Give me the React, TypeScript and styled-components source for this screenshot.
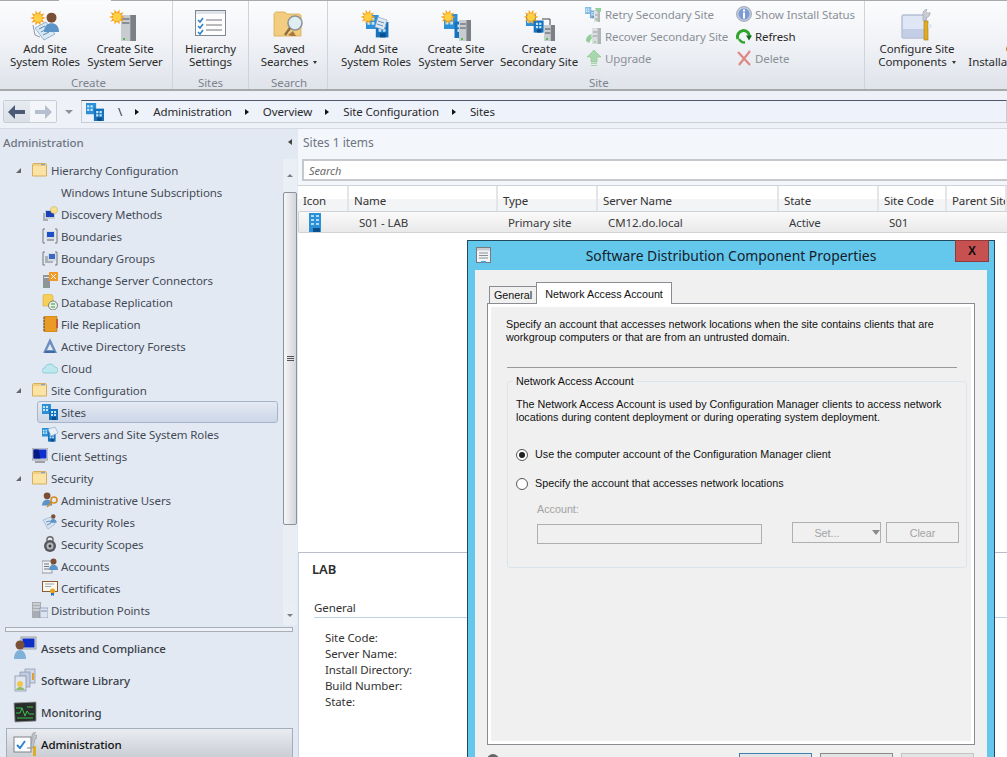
import React from 'react';
import styled, { createGlobalStyle } from 'styled-components';

const GlobalStyle = createGlobalStyle`
  html, body { margin: 0; padding: 0; background: #fff; }
  * { box-sizing: border-box; }
`;

const burst = (cx: number, cy: number, r1: number, r2: number, n = 10) => {
  const pts: string[] = [];
  for (let i = 0; i < n * 2; i++) {
    const r = i % 2 ? r2 : r1;
    const a = (Math.PI * i) / n;
    pts.push(`${(cx + r * Math.cos(a)).toFixed(2)},${(cy + r * Math.sin(a)).toFixed(2)}`);
  }
  return pts.join(' ');
};

const Sun = ({ cx, cy, r }: { cx: number; cy: number; r: number }) => (
  <g>
    <polygon points={burst(cx, cy, r, r * 0.55)} fill="#f7a11b" />
    <circle cx={cx} cy={cy} r={r * 0.5} fill="#ffd044" />
  </g>
);

const Blocks = ({ x = 0, y = 0, s = 1 }: { x?: number; y?: number; s?: number }) => (
  <g transform={`translate(${x} ${y}) scale(${s})`}>
    <rect x="0" y="0" width="9" height="10" fill="#2d8fd6" />
    <rect x="7" y="5" width="9" height="11" fill="#1672bd" />
    <path d="M1 2h2v2H1zM4 2h2v2H4zM1 5h2v2H1zM4 5h2v2H4zM9 7h2v2H9zM12 7h2v2h-2zM9 10h2v2H9zM12 10h2v2h-2z" fill="#bfe6fb" />
    <rect x="10" y="13" width="4" height="3" fill="#0b4f8d" />
  </g>
);

const Tower = ({ x, y, w, h }: { x: number; y: number; w: number; h: number }) => (
  <g>
    <rect x={x} y={y} width={w} height={h} fill="#c9cccf" />
    <rect x={x + w * 0.62} y={y} width={w * 0.38} height={h} fill="#7c8086" />
    <rect x={x + 1} y={y + 3} width={w * 0.5} height="2" fill="#8b9096" />
    <rect x={x + 1} y={y + 7} width={w * 0.5} height="2" fill="#8b9096" />
    <rect x={x + 2} y={y + h - 3} width="2" height="2" fill="#4fbf4a" />
  </g>
);

const Person = ({ x, y, s = 1 }: { x: number; y: number; s?: number }) => (
  <g transform={`translate(${x} ${y}) scale(${s})`}>
    <path d="M0 16c0-5 3-7 6-7s6 2 6 7z" fill="#5d94c8" />
    <circle cx="6" cy="4.5" r="4" fill="#7a4f36" />
  </g>
);

const AddRolesIcon = () => (
  <svg width="32" height="32" viewBox="0 0 32 32">
    <path d="M4 16l2 10 5 2" fill="none" stroke="#8e98a4" strokeWidth="1" />
    <path d="M6 19l11-6 9 12-11 6z" fill="#d8e8f5" stroke="#7ea3c4" strokeWidth=".8" />
    <path d="M10 20l6-3M12 23l6-3M14 26l6-3" stroke="#5d86ac" strokeWidth="1" />
    <Person x={15} y={3} s={1.25} />
    <Sun cx={9} cy={9} r={8} />
  </svg>
);

const CreateServerIcon = () => (
  <svg width="32" height="32" viewBox="0 0 32 32">
    <Tower x={12} y={6} w={15} h={26} />
    <Sun cx={8} cy={8} r={8} />
  </svg>
);

const HierarchyIcon = () => (
  <svg width="32" height="30" viewBox="0 0 32 30">
    <rect x=".5" y=".5" width="30" height="25" fill="#fdfdfe" stroke="#7f8791" />
    <rect x="1" y="1" width="29" height="3" fill="#dfe3e9" />
    <path d="M3 10l2 2 3-4M3 16l2 2 3-4M3 22l2 2 3-4" fill="none" stroke="#2b82c9" strokeWidth="1.5" />
    <path d="M11 10h16M11 15h16M11 20h16" stroke="#75767f" strokeWidth="1" />
  </svg>
);

const SearchFolderIcon = () => (
  <svg width="32" height="32" viewBox="0 0 32 32">
    <path d="M1 6c0-2 1-3 3-3h8l2 2h12c1 0 2 1 2 2v20H1z" fill="#f2cd80" stroke="#d9a84e" strokeWidth=".8" />
    <path d="M23 27l-5 0-3-1 5-4z" fill="#a87a3c" />
    <circle cx="22" cy="14" r="7" fill="#dfeef3" stroke="#8f9499" strokeWidth="1.6" />
    <path d="M17 19l-5 7" stroke="#8c6a44" strokeWidth="2.4" />
  </svg>
);

const AddSiteRoleIcon = () => (
  <svg width="32" height="32" viewBox="0 0 32 32">
    <Blocks x={6} y={6} s={1.4} />
    <path d="M18 8l9 3-3 10-9-3z" fill="#dfe9f4" stroke="#8ba7c4" strokeWidth=".7" />
    <path d="M18 12l6 2M17 15l6 2" stroke="#6b90b5" />
    <Sun cx={8} cy={8} r={7.5} />
  </svg>
);

const CreateSiteServerIcon = () => (
  <svg width="32" height="32" viewBox="0 0 32 32">
    <Blocks x={4} y={5} s={1.5} />
    <Tower x={19} y={11} w={12} h={21} />
    <Sun cx={8} cy={8} r={7.5} />
  </svg>
);

const SecondarySiteIcon = () => (
  <svg width="32" height="32" viewBox="0 0 32 32">
    <Blocks x={3} y={6} s={1.1} />
    <path d="M19 10h8v6" fill="none" stroke="#444" />
    <Tower x={21} y={16} w={11} h={16} />
    <Sun cx={8} cy={8} r={7.5} />
  </svg>
);

const RetryIcon = () => (
  <svg width="18" height="18" viewBox="0 0 18 18" opacity=".55">
    <Blocks x={0} y={2} s={.7} />
    <Tower x={9} y={6} w={6} h={11} />
    <path d="M10 3h6v4l-2-1-2 1z" fill="#3fae49" />
  </svg>
);

const RecoverIcon = () => (
  <svg width="18" height="18" viewBox="0 0 18 18" opacity=".55">
    <Tower x={7} y={1} w={9} h={16} />
    <path d="M1 14c0-4 2-6 6-7l-1 3 2-1-4 7z" fill="#46b04f" />
  </svg>
);

const UpgradeIcon = () => (
  <svg width="18" height="18" viewBox="0 0 18 18" opacity=".6">
    <path d="M9 1l7 7h-4v5H6V8H2z" fill="#7ac97d" stroke="#4da353" strokeWidth=".6" />
    <path d="M6 14.5h6M6 16.500h6" stroke="#7ac97d" />
  </svg>
);

const InfoIcon = () => (
  <svg width="16" height="16" viewBox="0 0 16 16">
    <circle cx="8" cy="8" r="7.500" fill="#bcc9e0" stroke="#a9acb3" />
    <circle cx="8" cy="8" r="5.500" fill="#7c9bd2" />
    <rect x="7" y="6.500" width="2" height="6" fill="#fff" />
    <rect x="7" y="3.500" width="2" height="2" fill="#fff" />
  </svg>
);

const RefreshIcon = () => (
  <svg width="16" height="16" viewBox="0 0 16 16">
    <path d="M2 11A6 6 0 1 1 13.500 9" fill="none" stroke="#2fa52c" strokeWidth="3" />
    <path d="M10 7.500h6l-3 5z" fill="#156e1b" />
    <path d="M3 11c1 2 3 3.500 6 3.500" fill="none" stroke="#2fa52c" strokeWidth="2.500" />
  </svg>
);

const DeleteIcon = () => (
  <svg width="16" height="16" viewBox="0 0 16 16" opacity=".6">
    <path d="M2 2l12 13M14 1L3 15" stroke="#d9453a" strokeWidth="2.200" />
  </svg>
);

const ConfigureIcon = () => (
  <svg width="32" height="32" viewBox="0 0 32 32">
    <rect x="1" y="6" width="24" height="23" rx="1" fill="#dfe6f5" stroke="#9aa6c6" />
    <rect x="2" y="20" width="22" height="8" fill="#c3cee6" />
    <rect x="23" y="12" width="4" height="19" fill="#e0ab25" stroke="#a57a10" strokeWidth=".6" />
    <path d="M22 4c0-2 2-3.500 4-3.500l-1 2 2 2 2-1c.5 3-2 5-4 5v3h-3z" fill="#c9ccd1" stroke="#8b8f96" strokeWidth=".5" />
    <circle cx="29" cy="17" r="2" fill="#dfe6f5" />
  </svg>
);

const SiteTreeIcon = () => (
  <svg width="18" height="18" viewBox="0 0 16 16">
    <Blocks />
  </svg>
);

const BackIcon = () => (
  <svg width="18" height="14" viewBox="0 0 18 14">
    <path d="M7 0L0 7l7 7V9h10V5H7z" fill="#4d5a75" />
  </svg>
);

const ForwardIcon = () => (
  <svg width="18" height="14" viewBox="0 0 18 14">
    <path d="M11 0l7 7-7 7V9H1V5h10z" fill="#b6bfce" />
  </svg>
);

const FolderIcon = () => (
  <svg width="15" height="14" viewBox="0 0 15 14">
    <path d="M.5 2c0-1 .5-1.500 1.500-1.500h11c1 0 1.500.5 1.500 1.500v11H.5z" fill="#fbe3a4" stroke="#d7ae5e" />
    <rect x="1" y="1" width="13" height="2" fill="#f2cf82" />
    <rect x="9" y="1" width="4" height="1.200" fill="#7aa6cf" />
  </svg>
);

const treeIcons: Record<string, React.ReactNode> = {
  discovery: (
    <>
      <rect x="1" y="7" width="5" height="8" fill="#aab0b6" />
      <rect x="3" y="4" width="10" height="9" fill="#c9ced4" />
      <rect x="4" y="5" width="8" height="6" fill="#1b3fb6" />
      <circle cx="12" cy="4" r="3.500" fill="#f6df8e" stroke="#c7a74a" strokeWidth=".5" />
    </>
  ),
  boundaries: (
    <>
      <path d="M3 1H1v14h2M13 1h2v14h-2" fill="none" stroke="#777" />
      <rect x="4" y="3" width="9" height="8" fill="#d6dbe0" />
      <rect x="5" y="4" width="7" height="5" fill="#1b4fc6" />
      <rect x="5" y="11" width="7" height="2" fill="#a0a6ad" />
    </>
  ),
  groups: (
    <>
      <path d="M3 2H1v13h2M13 2h2v13h-2" fill="none" stroke="#777" />
      <rect x="3" y="6" width="8" height="7" fill="#aab2ba" />
      <rect x="6" y="3" width="8" height="8" fill="#d6dbe0" />
      <rect x="7" y="4" width="6" height="5" fill="#3a66c8" />
    </>
  ),
  exchange: (
    <>
      <rect x="1" y="3" width="7" height="13" fill="#8e949a" />
      <rect x="2" y="5" width="5" height="1" fill="#e1e3e6" />
      <rect x="2" y="14" width="2" height="1" fill="#4fbf4a" />
      <rect x="7" y="0" width="9" height="9" fill="#f39a26" />
      <path d="M9 2l5 5M14 2l-5 5" stroke="#fff" />
    </>
  ),
  database: (
    <>
      <path d="M1 2c0-1 1-2 2-2h6l2 2v10H1z" fill="#f7cf58" stroke="#c79a2e" strokeWidth=".5" />
      <circle cx="11" cy="11.500" r="4.500" fill="#e7efe6" stroke="#555" strokeWidth=".7" />
      <path d="M9 10h4M9 13h4" stroke="#2c9d3a" />
    </>
  ),
  file: (
    <>
      <rect x="2" y="0" width="13" height="16" rx="1" fill="#e99b25" stroke="#a9690f" strokeWidth=".6" />
      <path d="M1 2h2M1 5h2M1 8h2M1 11h2M1 14h2" stroke="#555" />
      <rect x="14" y="3" width="2" height="9" fill="#c65b3a" />
    </>
  ),
  forests: (
    <>
      <path d="M8 0l7 15H1z" fill="#6c8fbf" />
      <path d="M8 6l3 6H5z" fill="#e3e9f2" />
      <rect x="3" y="13" width="10" height="2" fill="#3f6aa8" />
    </>
  ),
  cloud: (
    <path d="M3 13c-2 0-3-1-3-2.500S1 8 3 8c0-2 2-4 5-4 2 0 4 1 4.500 3 2 0 3.500 1.500 3.500 3s-1 3-3 3z" fill="#bfe8ee" stroke="#6cc3cf" strokeWidth=".7" />
  ),
  sites: <Blocks />,
  servers: (
    <>
      <Blocks x={0} y={2} s={.85} />
      <path d="M6 3l7-2 3 6-7 3z" fill="#e8eff7" stroke="#7ea3c4" strokeWidth=".6" />
    </>
  ),
  client: (
    <>
      <rect x="0" y="0" width="16" height="12" fill="#dfe1e4" stroke="#6f7276" strokeWidth=".6" />
      <rect x="1.500" y="1.500" width="13" height="9" fill="#0d2fd0" />
      <path d="M1.500 1.500h5l2 9h-7z" fill="#041a80" />
      <rect x="3" y="13" width="10" height="2" fill="#9da1a6" />
    </>
  ),
  users: (
    <>
      <Person x={0} y={0} s={.85} />
      <circle cx="12" cy="8" r="3" fill="none" stroke="#d58d22" strokeWidth="1.600" />
      <path d="M10 10l-5 5" stroke="#d58d22" strokeWidth="1.600" />
    </>
  ),
  roles: (
    <>
      <path d="M1 6l8-3 4 7-7 5z" fill="#d4e4f3" stroke="#8ba7c4" strokeWidth=".6" />
      <Person x={8} y={0} s={.55} />
      <path d="M4 8l4-1M5 11l4-2" stroke="#6b90b5" />
    </>
  ),
  scopes: (
    <>
      <path d="M5 5V3c0-3 6-3 6 0v2" fill="none" stroke="#666" strokeWidth="1.400" />
      <circle cx="8" cy="10" r="6" fill="#55585c" />
      <circle cx="8" cy="10" r="3.500" fill="#b5b8bc" />
      <circle cx="8" cy="10" r="1.500" fill="#3e3f42" />
    </>
  ),
  accounts: (
    <>
      <rect x="0" y="3" width="10" height="12" fill="#eef1f5" stroke="#70757c" strokeWidth=".7" />
      <path d="M2 6h5M2 8.500h5M2 11h5" stroke="#70757c" />
      <Person x={7} y={0} s={.75} />
    </>
  ),
  certs: (
    <>
      <rect x=".5" y="1.500" width="15" height="10" fill="#fbf7ea" stroke="#8e5b35" />
      <path d="M3 4h9M3 6.500h6" stroke="#8fa6bd" />
      <circle cx="10.500" cy="11" r="2.500" fill="#e4a51f" />
      <path d="M9 13v3l1.500-1 1.500 1v-3" fill="#2d6fb8" />
    </>
  ),
  dist: (
    <>
      <rect x="0" y="0" width="9" height="16" fill="#a8adb3" />
      <path d="M1 2h7M1 5h7M1 8h7" stroke="#eef0f2" />
      <rect x="8" y="6" width="8" height="10" fill="#dbe3ef" stroke="#7e8fa9" strokeWidth=".7" />
      <path d="M9 9h6" stroke="#7e8fa9" />
    </>
  ),
};

const NavAssets = () => (
  <svg width="24" height="24" viewBox="0 0 24 24">
    <rect x="8" y="1" width="15" height="12" fill="#d9dde2" stroke="#6d7278" strokeWidth=".6" />
    <rect x="9.500" y="2.500" width="12" height="9" fill="#0c2ec6" />
    <path d="M1 23c0-6 3-9 6-9s6 3 6 9z" fill="#7fb0d8" />
    <circle cx="7" cy="9" r="4.500" fill="#7a4f36" />
  </svg>
);

const NavLibrary = () => (
  <svg width="24" height="24" viewBox="0 0 24 24">
    <rect x="12" y="1" width="10" height="14" fill="#cfd8e8" stroke="#7b88a0" strokeWidth=".6" />
    <rect x="7" y="4" width="10" height="15" fill="#c0cbe0" stroke="#7b88a0" strokeWidth=".6" />
    <rect x="2" y="8" width="11" height="15" fill="#dfe5f1" stroke="#6e7c96" strokeWidth=".6" />
    <circle cx="7" cy="16" r="3" fill="#f0c54a" />
    <path d="M3 22c1-4 7-4 9 0z" fill="#8fbb6c" />
    <rect x="19" y="5" width="2" height="7" fill="#e0a030" />
  </svg>
);

const NavMonitoring = () => (
  <svg width="24" height="24" viewBox="0 0 24 24">
    <path d="M1 3l22-1v19L2 22z" fill="#2a2d2c" stroke="#8b8f8f" strokeWidth=".8" />
    <path d="M3 13h4l2-5 3 8 2-5 2 3h5M3 8h6M14 7h6M4 18h16" fill="none" stroke="#39c44a" strokeWidth="1" />
  </svg>
);

const NavAdmin = () => (
  <svg width="24" height="24" viewBox="0 0 24 24">
    <rect x="1" y="5" width="17" height="15" fill="#fbfcfe" stroke="#7e838c" />
    <path d="M4 13l3 3 5-7" fill="none" stroke="#2a7ed0" strokeWidth="1.800" />
    <path d="M14 16h4" stroke="#7e838c" />
    <rect x="20" y="14" width="3" height="10" fill="#e0ab25" />
    <path d="M19 3c0-1.500 2-3 3.500-2.500l-1 2 1.500 1.500 1-1v3l-2 1-2 9h-2l1-9z" fill="#bfc3c9" stroke="#85898f" strokeWidth=".5" />
  </svg>
);

const PropsIcon = () => (
  <svg width="15" height="16" viewBox="0 0 15 16">
    <rect x=".5" y=".5" width="14" height="15" fill="#f2f3f5" stroke="#767b82" />
    <rect x="1" y="1" width="13" height="2.500" fill="#c9cdd3" />
    <path d="M3 6h9M3 8.500h9M3 11h9" stroke="#8a8e95" />
    <rect x="5" y="14" width="5" height="1.500" fill="#42a9de" />
  </svg>
);

const Page = styled.div`
  position: relative;
  width: 1007px;
  height: 757px;
  overflow: hidden;
  display: flex;
  flex-direction: column;
  background: #e4eaf3;
  font-family: 'Noto Sans', 'Open Sans', sans-serif;
  font-size: 11.5px;
  letter-spacing: -0.1px;
  color: #333;
`;

const TabStrip = styled.div`
  flex: none;
  height: 1px;
  display: flex;
  background: #a9a9a9;
`;

const ActiveTabEdge = styled.div`
  margin-left: 59px;
  width: 52px;
  background: #f8f9fb;
`;

const Ribbon = styled.div`
  flex: none;
  height: 90px;
  display: flex;
  overflow: hidden;
  background: linear-gradient(#fbfcfd, #f1f3f7 45%, #dfe3ea);
  border-bottom: 2px solid #a8a9ab;
`;

const RibbonGroup = styled.div<{ $w?: number; $pad?: number }>`
  flex: none;
  width: ${(p) => (p.$w ? `${p.$w}px` : 'auto')};
  padding-left: ${(p) => p.$pad || 0}px;
  display: flex;
  flex-direction: column;
  border-right: 1px solid ${(p) => (p.$w ? '#cfd3da' : 'transparent')};
`;

const RibbonRow = styled.div`
  flex: none;
  height: 75px;
  display: flex;
`;

const GroupLabel = styled.div`
  flex: 1;
  text-align: center;
  line-height: 13px;
  color: #7d838b;
`;

const SiteLabel = styled(GroupLabel)`
  padding-left: 0;
  text-align: left;
  margin-left: 253px;
`;

const BigButton = styled.div<{ $w: number }>`
  flex: none;
  width: ${(p) => p.$w}px;
  display: flex;
  flex-direction: column;
  align-items: center;
  padding-top: 6px;
  color: #2b2b2b;
`;

const IconSlot = styled.div`
  height: 35px;
  display: flex;
  align-items: center;
  justify-content: center;
`;

const BigText = styled.div`
  line-height: 13px;
  text-align: center;
  white-space: nowrap;
`;

const Caret = styled.span`
  display: inline-block;
  margin-left: 5px;
  vertical-align: 2px;
  border-left: 2.5px solid transparent;
  border-right: 2.5px solid transparent;
  border-top: 3px solid #333;
`;

const SmallColumn = styled.div<{ $w: number; $shift?: number }>`
  flex: none;
  width: ${(p) => p.$w}px;
  margin-left: ${(p) => p.$shift || 0}px;
  padding-top: 2px;
`;

const SmallButton = styled.div<{ $off?: boolean }>`
  height: 22px;
  display: flex;
  align-items: center;
  gap: 2px;
  white-space: nowrap;
  color: ${(p) => (p.$off ? '#8b9098' : '#2b2b2b')};
`;

const SmallIcon = styled.span`
  flex: none;
  width: 18px;
  display: flex;
  justify-content: center;
`;

const AddressRow = styled.div`
  flex: none;
  height: 38px;
  display: flex;
  align-items: flex-start;
  padding: 9px 0 0 3px;
  background: #eef1f7;
  border-bottom: 1px solid #d5dae2;
`;

const NavButtons = styled.div`
  flex: none;
  width: 54px;
  height: 23px;
  display: flex;
  border: 1px solid #c9ced6;
  border-radius: 2px;
  background: #f3f5f9;
`;

const NavSide = styled.div<{ $active?: boolean }>`
  flex: 1;
  display: flex;
  align-items: center;
  justify-content: center;
  background: ${(p) => (p.$active ? 'linear-gradient(#e6eaf1, #dbe0e8)' : 'transparent')};
`;

const HistoryCaret = styled.div`
  flex: none;
  width: 24px;
  height: 23px;
  display: flex;
  align-items: center;
  justify-content: center;
`;

const GreyCaret = styled.span`
  border-left: 4px solid transparent;
  border-right: 4px solid transparent;
  border-top: 4px solid #8e939b;
`;

const Breadcrumb = styled.div`
  flex: 1;
  height: 23px;
  display: flex;
  align-items: center;
  padding-left: 4px;
  background: #eef2fb;
  border: 1px solid #c9ced6;
  border-top: 1px solid #4d5767;
  color: #2b2b2b;
  white-space: nowrap;
`;

const Crumb = styled.span`
  margin-left: 14px;
`;

const CrumbArrow = styled.span`
  margin-left: 13px;
  border-top: 3.5px solid transparent;
  border-bottom: 3.5px solid transparent;
  border-left: 4px solid #111;
`;

const Body = styled.div`
  flex: 1;
  min-height: 0;
  display: flex;
`;

const Sidebar = styled.div`
  flex: none;
  width: 298px;
  display: flex;
  flex-direction: column;
  background: #e3e9f3;
`;

const SideHeader = styled.div`
  flex: none;
  height: 30px;
  padding: 0 6px 4px 3px;
  display: flex;
  align-items: center;
  justify-content: space-between;
  color: #6d7580;
  font-weight: 500;
`;

const CollapseArrow = styled.span`
  border-top: 3.5px solid transparent;
  border-bottom: 3.5px solid transparent;
  border-right: 4px solid #444;
`;

const TreeArea = styled.div`
  flex: none;
  height: 466px;
  display: flex;
`;

const TreeList = styled.div`
  flex: 1;
  min-width: 0;
`;

const TreeRow = styled.div<{ $level: number; $selected?: boolean }>`
  height: 22px;
  width: ${(p) => (p.$level ? '241px' : '264px')};
  margin-left: ${(p) => (p.$level ? '37px' : '14px')};
  padding-left: ${(p) => (p.$level ? '4px' : '0')};
  display: flex;
  align-items: center;
  white-space: nowrap;
  color: #444b55;
  border: 1px solid ${(p) => (p.$selected ? '#a6b4c8' : 'transparent')};
  border-left-width: ${(p) => (p.$level ? '1px' : '0')};
  border-radius: 3px;
  background: ${(p) => (p.$selected ? 'linear-gradient(#e4eaf4, #ccd6e6)' : 'transparent')};
`;

const ExpandSlot = styled.span`
  flex: none;
  width: 18px;
  display: flex;
`;

const ExpandArrow = styled.span`
  margin-left: 2px;
  border-left: 5px solid transparent;
  border-bottom: 5px solid #666;
`;

const TreeIconSlot = styled.span`
  flex: none;
  width: 16px;
  height: 16px;
  margin-right: 3px;
  display: flex;
  align-items: center;
`;

const ScrollBar = styled.div`
  flex: none;
  width: 14px;
  margin-right: 1px;
  display: flex;
  flex-direction: column;
  align-items: stretch;
`;

const ScrollEnd = styled.div<{ $h: number }>`
  flex: none;
  height: ${(p) => p.$h}px;
  display: flex;
  align-items: center;
  justify-content: center;
  background: #eaeef5;
`;

const ScrollUp = styled.span`
  border-left: 3px solid transparent;
  border-right: 3px solid transparent;
  border-bottom: 3px solid #7a7f87;
`;

const ScrollDown = styled.span`
  border-left: 3px solid transparent;
  border-right: 3px solid transparent;
  border-top: 3px solid #7a7f87;
`;

const ScrollThumb = styled.div`
  flex: none;
  height: 333px;
  display: flex;
  align-items: center;
  justify-content: center;
  background: linear-gradient(90deg, #f6f7f9, #d2d5da);
  border: 1px solid #8d9198;
  border-radius: 2px;
`;

const ThumbGrip = styled.span`
  width: 7px;
  height: 6px;
  background: repeating-linear-gradient(#555 0 1px, transparent 1px 2px);
`;

const ScrollTrack = styled.div`
  flex: 1;
  background: #e9edf4;
`;

const Splitter = styled.div`
  flex: none;
  height: 5px;
  margin: 2px 5px 0;
  background: #eef1f6;
  border: 1px solid #a9afb9;
`;

const NavItem = styled.div<{ $selected?: boolean }>`
  flex: none;
  height: 32px;
  margin: 0 5px 0 6px;
  padding-left: 6px;
  display: flex;
  align-items: center;
  gap: 4px;
  font-weight: 500;
  border: 1px solid ${(p) => (p.$selected ? '#a4adba' : 'transparent')};
  background: ${(p) => (p.$selected ? 'linear-gradient(#e9ecf1, #c8ccd3)' : 'transparent')};
  color: ${(p) => (p.$selected ? '#111' : '#3a3f47')};
`;

const Main = styled.div`
  flex: 1;
  min-width: 0;
  display: flex;
  flex-direction: column;
  background: #fff;
`;

const ListArea = styled.div`
  flex: none;
  height: 423px;
  display: flex;
  flex-direction: column;
`;

const ListTop = styled.div`
  flex: none;
  height: 56px;
  background: #f3f6fb;
`;

const ListTitle = styled.div`
  height: 30px;
  padding: 0 0 4px 5px;
  display: flex;
  align-items: center;
  color: #6d7580;
  font-size: 12px;
  letter-spacing: 0;
`;

const SearchBox = styled.div`
  height: 22px;
  margin-left: 4px;
  padding-left: 5px;
  display: flex;
  align-items: center;
  font-style: italic;
  font-size: 11px;
  color: #6a6a6a;
  background: #fff;
  border: 2px solid #c5c9ce;
  border-right: 0;
`;

const Columns = '51px 149px 100px 181px 100px 68px 1fr';

const HeaderRow = styled.div`
  flex: none;
  height: 26px;
  display: grid;
  grid-template-columns: ${Columns};
  background: linear-gradient(#fff 50%, #f3f4f6 50%);
  border-top: 1px solid #cfd2d6;
  white-space: nowrap;
`;

const HeaderCell = styled.div`
  padding: 4px 0 0 5px;
  display: flex;
  align-items: center;
  color: #333;
  border-right: 2px solid #e3e5e8;
  overflow: hidden;
`;

const ItemRow = styled.div`
  flex: none;
  height: 22px;
  display: grid;
  grid-template-columns: ${Columns};
  background: linear-gradient(#fafafa, #e9e9ea);
  border: 1px solid #d0d2d5;
  border-right: 0;
  border-radius: 2px 0 0 2px;
`;

const ItemCell = styled.div`
  padding: 1px 0 0 9px;
  display: flex;
  align-items: center;
  color: #3a3a3a;
`;

const TallSite = styled.svg`
  display: block;
  margin: -1px 0 0 1px;
`;

const Detail = styled.div`
  flex: 1;
  padding-left: 15px;
  border-top: 1px solid #b9bccb;
  border-left: 1px solid #c7d3e4;
`;

const DetailTitle = styled.div`
  margin: 7px 0 0 -2px;
  line-height: 18px;
  font-size: 13px;
  font-weight: 600;
  color: #2d2d2d;
`;

const DetailSection = styled.div`
  margin-top: 21px;
  line-height: 17px;
  padding-bottom: 1px;
  border-bottom: 1px solid #bcd3e8;
  color: #333;
`;

const DetailFields = styled.div`
  margin: 12px 0 0 11px;
  line-height: 16px;
  color: #333;
`;

const Dialog = styled.div`
  position: absolute;
  left: 467px;
  top: 240px;
  width: 528px;
  height: 540px;
  padding: 0 7px;
  background: #63c8ec;
  border: 1px solid #1f4a5e;
  font-family: 'Liberation Sans', Arial, sans-serif;
  font-size: 10.75px;
  letter-spacing: 0;
  color: #111;
`;

const TitleBar = styled.div`
  height: 29px;
  display: flex;
  align-items: center;
  justify-content: center;
  font-family: 'Noto Sans', sans-serif;
  font-size: 13.9px;
  color: #16202a;
`;

const TitleIcon = styled.span`
  position: absolute;
  left: 8px;
  top: 6px;
  display: flex;
`;

const CloseButton = styled.div`
  position: absolute;
  top: -1px;
  right: 5px;
  width: 34px;
  height: 22px;
  display: flex;
  align-items: center;
  justify-content: center;
  background: #c75050;
  border: 1px solid #8f3a3a;
  font-family: 'Liberation Sans', sans-serif;
  font-size: 12px;
  font-weight: 700;
  color: #111;
`;

const Client = styled.div`
  height: 500px;
  padding: 13px 12px 0;
  background: #f0f0f0;
`;

const TabsRow = styled.div`
  height: 21px;
  display: flex;
  align-items: flex-end;
  padding-left: 2px;
  margin-bottom: -1px;
`;

const DialogTab = styled.div<{ $active?: boolean }>`
  position: relative;
  height: ${(p) => (p.$active ? 22 : 18)}px;
  width: ${(p) => (p.$active ? 136 : 47)}px;
  display: flex;
  align-items: center;
  justify-content: center;
  background: ${(p) => (p.$active ? '#fff' : '#f0f0f0')};
  border: 1px solid #8a8c92;
  border-bottom: ${(p) => (p.$active ? '0' : '1px solid #8a8c92')};
  border-right: ${(p) => (p.$active ? '1px solid #8a8c92' : '0')};
  color: #111;
  z-index: ${(p) => (p.$active ? 1 : 0)};
`;

const TabPanel = styled.div`
  height: 442px;
  padding: 14px 8px 0 18px;
  background: #f0f0f0;
  border: 1px solid #8a8c92;
  box-shadow: inset 0 0 0 3px #fff;
`;

const Paragraph = styled.div`
  line-height: 13px;
  white-space: nowrap;
`;

const Rule = styled.div`
  height: 1px;
  width: 450px;
  margin: 23px 0 7px 1px;
  background: #9a9a9a;
`;

const GroupBox = styled.fieldset`
  margin: 0 0 0 1px;
  padding: 10px 8px 23px 8px;
  width: 460px;
  min-width: 0;
  border: 1px solid #dbe5ec;
  border-radius: 3px;
`;

const GroupLegend = styled.legend`
  margin-left: -3px;
  padding: 0 3px;
  line-height: 13px;
`;

const RadioRow = styled.div<{ $top: number }>`
  margin-top: ${(p) => p.$top}px;
  display: flex;
  align-items: center;
  gap: 7px;
  line-height: 13px;
`;

const Radio = styled.span<{ $checked?: boolean }>`
  flex: none;
  width: 12px;
  height: 12px;
  display: flex;
  align-items: center;
  justify-content: center;
  background: #fff;
  border: 1px solid #55585c;
  border-radius: 50%;

  &::after {
    content: '';
    width: 6px;
    height: 6px;
    border-radius: 50%;
    background: ${(p) => (p.$checked ? '#222' : 'transparent')};
  }
`;

const AccountLabel = styled.div`
  margin: 13px 0 0 21px;
  line-height: 13px;
  color: #a3a3a3;
`;

const AccountRow = styled.div`
  margin: 6px 0 0 21px;
  display: flex;
  align-items: flex-start;
`;

const AccountInput = styled.div`
  flex: none;
  width: 225px;
  height: 20px;
  margin-top: 2px;
  margin-right: 30px;
  background: #f0f0f0;
  border: 1px solid #acb0b3;
`;

const DisabledButton = styled.div<{ $w: number; $pad?: number }>`
  flex: none;
  width: ${(p) => p.$w}px;
  height: 21px;
  display: flex;
  align-items: center;
  justify-content: center;
  gap: 32px;
  padding-left: ${(p) => p.$pad || 0}px;
  margin-right: 5px;
  background: #f0f0f0;
  border: 1px solid #adb1b4;
  color: #a3a3a3;
`;

const SplitCaret = styled.span`
  border-left: 4.5px solid transparent;
  border-right: 4.5px solid transparent;
  border-top: 5px solid #8a8a8a;
`;

const FooterRow = styled.div`
  margin-top: 8px;
  display: flex;
  justify-content: flex-end;
  gap: 8px;
  padding-right: 1px;
`;

const HelpDot = styled.span`
  width: 12px;
  height: 12px;
  margin-right: auto;
  margin-top: 1px;
  border-radius: 50%;
  background: #666;
`;

const FooterButton = styled.div<{ $tone: string }>`
  width: 73px;
  height: 22px;
  background: #e4e4e4;
  border: 1px solid ${(p) => p.$tone};
`;

type TreeItem = { label: string; level: number; icon?: string; folder?: boolean; open?: boolean; selected?: boolean };

const tree: TreeItem[] = [
  { label: 'Hierarchy Configuration', level: 0, folder: true, open: true },
  { label: 'Windows Intune Subscriptions', level: 1 },
  { label: 'Discovery Methods', level: 1, icon: 'discovery' },
  { label: 'Boundaries', level: 1, icon: 'boundaries' },
  { label: 'Boundary Groups', level: 1, icon: 'groups' },
  { label: 'Exchange Server Connectors', level: 1, icon: 'exchange' },
  { label: 'Database Replication', level: 1, icon: 'database' },
  { label: 'File Replication', level: 1, icon: 'file' },
  { label: 'Active Directory Forests', level: 1, icon: 'forests' },
  { label: 'Cloud', level: 1, icon: 'cloud' },
  { label: 'Site Configuration', level: 0, folder: true, open: true },
  { label: 'Sites', level: 1, icon: 'sites', selected: true },
  { label: 'Servers and Site System Roles', level: 1, icon: 'servers' },
  { label: 'Client Settings', level: 0, icon: 'client' },
  { label: 'Security', level: 0, folder: true, open: true },
  { label: 'Administrative Users', level: 1, icon: 'users' },
  { label: 'Security Roles', level: 1, icon: 'roles' },
  { label: 'Security Scopes', level: 1, icon: 'scopes' },
  { label: 'Accounts', level: 1, icon: 'accounts' },
  { label: 'Certificates', level: 1, icon: 'certs' },
  { label: 'Distribution Points', level: 0, icon: 'dist' },
];

const headers = ['Icon', 'Name', 'Type', 'Server Name', 'State', 'Site Code', 'Parent Site'];
const fields = ['Site Code:', 'Server Name:', 'Install Directory:', 'Build Number:', 'State:'];

const Big = ({ w, icon, lines, caret }: { w: number; icon: React.ReactNode; lines: [string, string]; caret?: boolean }) => (
  <BigButton $w={w}>
    <IconSlot>{icon}</IconSlot>
    <BigText>
      {lines[0]}
      <br />
      {lines[1]}
      {caret && <Caret />}
    </BigText>
  </BigButton>
);

const Small = ({ icon, label, off }: { icon: React.ReactNode; label: string; off?: boolean }) => (
  <SmallButton $off={off}>
    <SmallIcon>{icon}</SmallIcon>
    {label}
  </SmallButton>
);

export default function App() {
  return (
    <Page>
      <GlobalStyle />
      <TabStrip>
        <ActiveTabEdge />
      </TabStrip>
      <Ribbon>
        <RibbonGroup $w={173} $pad={5}>
          <RibbonRow>
            <Big w={80} icon={<AddRolesIcon />} lines={['Add Site', 'System Roles']} />
            <Big w={80} icon={<CreateServerIcon />} lines={['Create Site', 'System Server']} />
          </RibbonRow>
          <GroupLabel>Create</GroupLabel>
        </RibbonGroup>
        <RibbonGroup $w={76}>
          <RibbonRow>
            <Big w={75} icon={<HierarchyIcon />} lines={['Hierarchy', 'Settings']} />
          </RibbonRow>
          <GroupLabel>Sites</GroupLabel>
        </RibbonGroup>
        <RibbonGroup $w={79} $pad={2}>
          <RibbonRow>
            <Big w={76} icon={<SearchFolderIcon />} lines={['Saved', 'Searches']} caret />
          </RibbonRow>
          <GroupLabel>Search</GroupLabel>
        </RibbonGroup>
        <RibbonGroup $w={537} $pad={8}>
          <RibbonRow>
            <Big w={80} icon={<AddSiteRoleIcon />} lines={['Add Site', 'System Roles']} />
            <Big w={80} icon={<CreateSiteServerIcon />} lines={['Create Site', 'System Server']} />
            <Big w={86} icon={<SecondarySiteIcon />} lines={['Create', 'Secondary Site']} />
            <SmallColumn $w={150} $shift={3}>
              <Small off icon={<RetryIcon />} label="Retry Secondary Site" />
              <Small off icon={<RecoverIcon />} label="Recover Secondary Site" />
              <Small off icon={<UpgradeIcon />} label="Upgrade" />
            </SmallColumn>
            <SmallColumn $w={120}>
              <Small off icon={<InfoIcon />} label="Show Install Status" />
              <Small icon={<RefreshIcon />} label="Refresh" />
              <Small off icon={<DeleteIcon />} label="Delete" />
            </SmallColumn>
          </RibbonRow>
          <SiteLabel>Site</SiteLabel>
        </RibbonGroup>
        <RibbonGroup $pad={12}>
          <RibbonRow>
            <Big w={80} icon={<ConfigureIcon />} lines={['Configure Site', 'Components']} caret />
            <Big w={128} icon={null} lines={['Client', 'Installation Settings']} />
          </RibbonRow>
        </RibbonGroup>
      </Ribbon>

      <AddressRow>
        <NavButtons>
          <NavSide $active>
            <BackIcon />
          </NavSide>
          <NavSide>
            <ForwardIcon />
          </NavSide>
        </NavButtons>
        <HistoryCaret>
          <GreyCaret />
        </HistoryCaret>
        <Breadcrumb>
          <SiteTreeIcon />
          <Crumb>\</Crumb>
          <CrumbArrow />
          <Crumb>Administration</Crumb>
          <CrumbArrow />
          <Crumb>Overview</Crumb>
          <CrumbArrow />
          <Crumb>Site Configuration</Crumb>
          <CrumbArrow />
          <Crumb>Sites</Crumb>
        </Breadcrumb>
      </AddressRow>

      <Body>
        <Sidebar>
          <SideHeader>
            Administration
            <CollapseArrow />
          </SideHeader>
          <TreeArea>
            <TreeList>
              {tree.map((item) => (
                <TreeRow key={item.label} $level={item.level} $selected={item.selected}>
                  {item.level === 0 && <ExpandSlot>{item.open && <ExpandArrow />}</ExpandSlot>}
                  <TreeIconSlot>
                    {item.folder && <FolderIcon />}
                    {item.icon && (
                      <svg width="16" height="16" viewBox="0 0 16 16">
                        {treeIcons[item.icon]}
                      </svg>
                    )}
                  </TreeIconSlot>
                  {item.label}
                </TreeRow>
              ))}
            </TreeList>
            <ScrollBar>
              <ScrollEnd $h={33}>
                <ScrollUp />
              </ScrollEnd>
              <ScrollThumb>
                <ThumbGrip />
              </ScrollThumb>
              <ScrollTrack />
              <ScrollEnd $h={20}>
                <ScrollDown />
              </ScrollEnd>
            </ScrollBar>
          </TreeArea>
          <Splitter />
          <NavItem>
            <NavAssets />
            Assets and Compliance
          </NavItem>
          <NavItem>
            <NavLibrary />
            Software Library
          </NavItem>
          <NavItem>
            <NavMonitoring />
            Monitoring
          </NavItem>
          <NavItem $selected>
            <NavAdmin />
            Administration
          </NavItem>
        </Sidebar>

        <Main>
          <ListArea>
            <ListTop>
              <ListTitle>Sites 1 items</ListTitle>
              <SearchBox>Search</SearchBox>
            </ListTop>
            <HeaderRow>
              {headers.map((h) => (
                <HeaderCell key={h}>{h}</HeaderCell>
              ))}
            </HeaderRow>
            <ItemRow>
              <ItemCell>
                <TallSite width="12" height="19" viewBox="0 0 12 19">
                  <rect x="0" y="0" width="12" height="19" fill="#2d8fd6" />
                  <path d="M2 2h3v2H2zM7 2h3v2H7zM2 6h3v2H2zM7 6h3v2H7zM2 10h3v2H2zM7 10h3v2H7z" fill="#a9dcf8" />
                  <rect x="4" y="15" width="7" height="4" fill="#0b4f8d" />
                </TallSite>
              </ItemCell>
              <ItemCell>S01 - LAB</ItemCell>
              <ItemCell>Primary site</ItemCell>
              <ItemCell>CM12.do.local</ItemCell>
              <ItemCell>Active</ItemCell>
              <ItemCell>S01</ItemCell>
              <ItemCell />
            </ItemRow>
          </ListArea>
          <Detail>
            <DetailTitle>LAB</DetailTitle>
            <DetailSection>General</DetailSection>
            <DetailFields>
              {fields.map((f) => (
                <div key={f}>{f}</div>
              ))}
            </DetailFields>
          </Detail>
        </Main>
      </Body>

      <Dialog>
        <TitleBar>Software Distribution Component Properties</TitleBar>
        <TitleIcon>
          <PropsIcon />
        </TitleIcon>
        <CloseButton>X</CloseButton>
        <Client>
          <TabsRow>
            <DialogTab>General</DialogTab>
            <DialogTab $active>Network Access Account</DialogTab>
          </TabsRow>
          <TabPanel>
            <Paragraph>
              Specify an account that accesses network locations when the site contains clients that are
              <br />
              workgroup computers or that are from an untrusted domain.
            </Paragraph>
            <Rule />
            <GroupBox>
              <GroupLegend>Network Access Account</GroupLegend>
              <Paragraph>
                The Network Access Account is used by Configuration Manager clients to access network
                <br />
                locations during content deployment or during operating system deployment.
              </Paragraph>
              <RadioRow $top={24}>
                <Radio $checked />
                Use the computer account of the Configuration Manager client
              </RadioRow>
              <RadioRow $top={16}>
                <Radio />
                Specify the account that accesses network locations
              </RadioRow>
              <AccountLabel>Account:</AccountLabel>
              <AccountRow>
                <AccountInput />
                <DisabledButton $w={89} $pad={21}>
                  Set...
                  <SplitCaret />
                </DisabledButton>
                <DisabledButton $w={73}>Clear</DisabledButton>
              </AccountRow>
            </GroupBox>
          </TabPanel>
          <FooterRow>
            <HelpDot />
            <FooterButton $tone="#3c7fb1" />
            <FooterButton $tone="#8a8a8a" />
            <FooterButton $tone="#c4c4c4" />
          </FooterRow>
        </Client>
      </Dialog>
    </Page>
  );
}
